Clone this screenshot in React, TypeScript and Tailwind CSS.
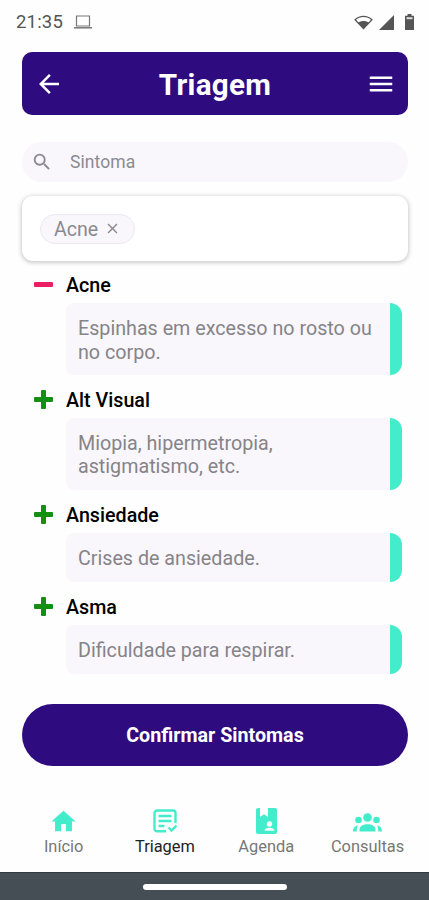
import { MdArrowBack, MdMenu, MdSearch, MdClose, MdHome } from 'react-icons/md';

interface Symptom {
  name: string;
  description: string;
  selected?: boolean;
}

const symptoms: Symptom[] = [
  { name: 'Acne', description: 'Espinhas em excesso no rosto ou no corpo.', selected: true },
  { name: 'Alt Visual', description: 'Miopia, hipermetropia, astigmatismo, etc.' },
  { name: 'Ansiedade', description: 'Crises de ansiedade.' },
  { name: 'Asma', description: 'Dificuldade para respirar.' },
];

const tabs = [
  { label: 'Início', icon: HomeIcon },
  { label: 'Triagem', icon: FormIcon, active: true },
  { label: 'Agenda', icon: ContactBookIcon },
  { label: 'Consultas', icon: GroupIcon },
];

export default function App() {
  return (
    <div className="flex h-[900px] w-[429px] flex-col overflow-hidden bg-[#fefefe] font-[Roboto,sans-serif]">
      <StatusBar />

      <main className="flex flex-1 flex-col pl-[22px] pr-[21px]">
        <header className="flex h-[63px] items-center justify-between rounded-[10px] bg-[#2f0b80] px-3 text-white">
          <MdArrowBack className="h-[30px] w-[30px]" />
          <h1 className="pt-[5px] text-[29.6px] font-bold leading-none tracking-[0.3px]">Triagem</h1>
          <MdMenu className="h-[30px] w-[30px]" />
        </header>

        <div className="mt-[27px] flex h-10 items-center rounded-full bg-[#f9f6fc] pl-[9px] text-[#8b8a90]">
          <MdSearch className="h-[22px] w-[22px]" />
          <span className="ml-[17px] text-[17.5px] tracking-[0.1px]">Sintoma</span>
        </div>

        <div className="mt-[14px] flex h-[65px] items-center rounded-[11px] bg-white px-[18px] shadow-[0_1px_4px_1px_rgba(0,0,0,0.2)]">
          <div className="flex h-[30px] w-[95px] items-center rounded-full border border-[#ebe8ee] bg-[#f9f6fc] pl-[13px] text-[#8a8a8e]">
            <span className="pt-[2px] text-[19.6px] leading-6">Acne</span>
            <MdClose className="ml-[6px] h-[17px] w-[17px]" />
          </div>
        </div>

        <ul className="mt-3 flex flex-col">
          {symptoms.map((s) => (
            <SymptomItem key={s.name} {...s} />
          ))}
        </ul>

        <button className="mt-[17px] h-[62px] shrink-0 rounded-full bg-[#2f0b80] pt-[3px] text-[19.7px] font-bold text-white">
          Confirmar Sintomas
        </button>
      </main>

      <BottomNav />
    </div>
  );
}

function StatusBar() {
  return (
    <div className="flex h-[52px] shrink-0 items-start justify-between pl-4 pr-[15px] pt-[12px] text-[#555]">
      <div className="flex items-center">
        <span className="text-[18.5px] leading-[20px] tracking-[0.2px]">21:35</span>
        <svg className="ml-[11px] h-[14px] w-[18px]" viewBox="0 0 18 14" fill="none" stroke="#777">
          <path d="M2.5 1h13v10h-13z" strokeWidth="1.2" />
          <path d="M0 12.8h18" strokeWidth="1.5" />
        </svg>
      </div>
      <div className="flex items-center gap-[6px] pt-[2px]">
        <svg className="h-[15px] w-[19px]" viewBox="0 0 19 15">
          <path d="M1.1 4.8C5.8.2 13.2.2 17.9 4.8L9.5 13.6z" fill="none" stroke="#555" strokeWidth="1.3" />
          <path d="M4 7.6c3.2-2.2 7.8-2.2 11 0L9.5 14z" fill="#555" />
        </svg>
        <svg className="h-[15px] w-[15px]" viewBox="0 0 15 15" fill="#555">
          <path d="M15 0v15H0z" />
        </svg>
        <svg className="ml-[5px] h-4 w-[9px]" viewBox="0 0 9 16">
          <path d="M2.5 0h4v1.7H9V16H0V1.7h2.5z" fill="#555" />
          <path d="M1.5 3.2h6v2h-6z" fill="#ddd" />
        </svg>
      </div>
    </div>
  );
}

function SymptomItem({ name, description, selected }: Symptom) {
  return (
    <li className="pr-[6px]">
      <div className="flex h-[23px] items-center pl-3">
        <svg className="h-[19px] w-[19px]" viewBox="0 0 19 19" fill={selected ? '#e91e63' : '#129012'}>
          <rect y="7" width="19" height="5" rx="1" />
          {!selected && <rect x="7" width="5" height="19" rx="1" />}
        </svg>
        <h2 className="ml-[13px] pt-[2px] text-[19.7px] font-medium leading-[23px] text-black">{name}</h2>
      </div>
      <div className="mb-[12.6px] ml-11 mt-[7px] flex overflow-hidden rounded-l-[8px] rounded-r-[12px] bg-[#f9f6fc]">
        <p className="flex-1 pb-[11.7px] pl-3 pr-[10px] pt-[14.3px] text-[19.7px] leading-[23.2px] text-[#858488]">
          {description}
        </p>
        <span className="w-3 shrink-0 bg-[#43edcb]" />
      </div>
    </li>
  );
}

function BottomNav() {
  return (
    <footer className="shrink-0">
      <nav className="flex h-[72px] pl-[13px]">
        {tabs.map(({ label, icon: Icon, active }) => (
          <div key={label} className="flex w-[101.3px] shrink-0 flex-col items-center">
            <div className="flex h-[42px] items-center justify-center text-[#43edcb]">
              <Icon />
            </div>
            <span
              className={`-mt-[5px] text-[16.4px] leading-[20px] ${active ? 'text-[#222]' : 'text-[#777]'}`}
            >
              {label}
            </span>
          </div>
        ))}
      </nav>
      <div className="flex h-[28px] items-center justify-center border-t border-[#2f3a40] bg-[#454e55]">
        <span className="h-[6px] w-36 rounded-full bg-white" />
      </div>
    </footer>
  );
}

function HomeIcon() {
  return <MdHome className="h-[29px] w-[29px]" />;
}

function FormIcon() {
  return (
    <svg className="h-6 w-6" viewBox="0 0 24 24" fill="none" stroke="currentColor" strokeWidth="2.4">
      <path d="M13 22.3H4a2.5 2.5 0 0 1-2.5-2.5V4A2.5 2.5 0 0 1 4 1.5h16A2.5 2.5 0 0 1 22.5 4v10" />
      <path d="M5.5 7h13M5.5 12h13M5.5 17h6M15.5 18.5l3 3 5-5" />
    </svg>
  );
}

function ContactBookIcon() {
  return (
    <svg className="h-[26px] w-[21px]" viewBox="0 0 21 26" fill="currentColor">
      <path d="M2 0h2v9l4-2.7L12 9V0h7a2 2 0 0 1 2 2v22a2 2 0 0 1-2 2H2a2 2 0 0 1-2-2V2a2 2 0 0 1 2-2z" />
      <circle cx="13.5" cy="16" r="2.7" fill="#fefefe" />
      <path d="M8.5 22.8c0-4 10-4 10 0z" fill="#fefefe" />
    </svg>
  );
}

function GroupIcon() {
  return (
    <svg className="mt-[3px] h-[19px] w-[29px]" viewBox="0 0 29 19" fill="currentColor">
      <circle cx="14.5" cy="4.5" r="4.3" />
      <circle cx="5.5" cy="7" r="3.3" />
      <circle cx="23.5" cy="7" r="3.3" />
      <path d="M6.5 18.5v-2c0-7 16-7 16 0v2zM0 18.5c0-3 1.500-5.500 5-6-1 1.500-1.300 3.500-1.200 6zM29 18.500c0-3-1.500-5.500-5-6 1 1.500 1.300 3.500 1.200 6z" />
    </svg>
  );
}
